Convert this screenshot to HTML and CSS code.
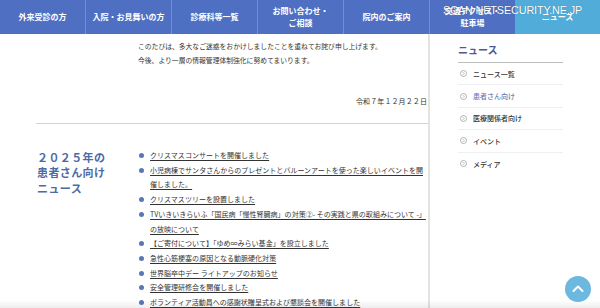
FILE: index.html
```html
<!DOCTYPE html>
<html lang="ja">
<head>
<meta charset="utf-8">
<title>患者さん向けニュース</title>
<link rel="stylesheet" href="styles.css">
</head>
<body>
<nav class="gnav">
  <a class="gnav-item">外来受診の方</a>
  <a class="gnav-item">入院・お見舞いの方</a>
  <a class="gnav-item">診療科等一覧</a>
  <a class="gnav-item">お問い合わせ・<br>ご相談</a>
  <a class="gnav-item">院内のご案内</a>
  <a class="gnav-item">交通アクセス・<br>駐車場</a>
  <a class="gnav-item current">ニュース</a>
</nav>
<div class="watermark">SCAN NETSECURITY.NE.JP</div>

<div class="page">
  <main class="main">
    <div class="notice">
      <p>このたびは、多大なご迷惑をおかけしましたことを重ねてお詫び申し上げます。</p>
      <p>今後、より一層の情報管理体制強化に努めてまいります。</p>
    </div>
    <p class="date">令和７年１２月２２日</p>
    <hr class="rule">
    <section class="news">
      <h2 class="news-title">２０２５年の<br>患者さん向け<br>ニュース</h2>
      <ul class="news-list">
        <li><a>クリスマスコンサートを開催しました</a></li>
        <li><a>小児病棟でサンタさんからのプレゼントとバルーンアートを使った楽しいイベントを開催しました。</a></li>
        <li><a>クリスマスツリーを設置しました</a></li>
        <li><a>TVいきいきらいふ「国民病「慢性腎臓病」の対策②- その実践と県の取組みについて -」の放映について</a></li>
        <li><a>【ご寄付について】「ゆめ∞みらい基金」を設立しました</a></li>
        <li><a>急性心筋梗塞の原因となる動脈硬化対策</a></li>
        <li><a>世界脳卒中デー ライトアップのお知らせ</a></li>
        <li><a>安全管理研修会を開催しました</a></li>
        <li><a>ボランティア活動員への感謝状贈呈式および懇談会を開催しました</a></li>
      </ul>
    </section>
  </main>
  <aside class="side">
    <h3 class="side-title">ニュース</h3>
    <ul class="side-list">
      <li><svg class="ico" viewBox="0 0 10 10"><circle cx="5" cy="5" r="4.3" fill="none" stroke="#8a8a8a" stroke-width="0.9"/><path d="M4.2 3.2 L6 5 L4.2 6.8" fill="none" stroke="#8a8a8a" stroke-width="0.9"/></svg>ニュース一覧</li>
      <li class="active"><svg class="ico" viewBox="0 0 10 10"><circle cx="5" cy="5" r="4.3" fill="none" stroke="#8a8a8a" stroke-width="0.9"/><path d="M4.2 3.2 L6 5 L4.2 6.8" fill="none" stroke="#8a8a8a" stroke-width="0.9"/></svg>患者さん向け</li>
      <li><svg class="ico" viewBox="0 0 10 10"><circle cx="5" cy="5" r="4.3" fill="none" stroke="#8a8a8a" stroke-width="0.9"/><path d="M4.2 3.2 L6 5 L4.2 6.8" fill="none" stroke="#8a8a8a" stroke-width="0.9"/></svg>医療関係者向け</li>
      <li><svg class="ico" viewBox="0 0 10 10"><circle cx="5" cy="5" r="4.3" fill="none" stroke="#8a8a8a" stroke-width="0.9"/><path d="M4.2 3.2 L6 5 L4.2 6.8" fill="none" stroke="#8a8a8a" stroke-width="0.9"/></svg>イベント</li>
      <li><svg class="ico" viewBox="0 0 10 10"><circle cx="5" cy="5" r="4.3" fill="none" stroke="#8a8a8a" stroke-width="0.9"/><path d="M4.2 3.2 L6 5 L4.2 6.8" fill="none" stroke="#8a8a8a" stroke-width="0.9"/></svg>メディア</li>
    </ul>
  </aside>
</div>

<a class="totop"><svg viewBox="0 0 26 26"><path d="M8.5 15 L13 10.5 L17.5 15" fill="none" stroke="#fff" stroke-width="2" stroke-linecap="round" stroke-linejoin="round"/></svg></a>
<div class="shade"></div>
</body>
</html>
```

FILE: styles.css
```css
* { box-sizing: border-box; }
html, body { margin: 0; padding: 0; }
body {
  width: 600px;
  height: 308px;
  overflow: hidden;
  background: #fff;
  color: #333;
  font-family: "Noto Sans CJK JP", "Noto Sans", sans-serif;
  position: relative;
}
p, h2, h3, ul { margin: 0; padding: 0; }
ul { list-style: none; }

.gnav {
  display: flex;
  height: 34px;
  background: #4e6fc2;
}
.gnav-item {
  flex: 1;
  display: flex;
  align-items: center;
  justify-content: center;
  text-align: center;
  color: #fff;
  font-size: 8px;
  font-weight: 700;
  line-height: 12px;
  border-left: 1px solid rgba(255,255,255,0.22);
}
.gnav-item:first-child { border-left: none; }
.gnav-item.current { background: #52acd9; border-left: none; }

.watermark {
  position: absolute;
  left: 443px;
  top: 4px;
  font-family: "Liberation Sans", Arial, sans-serif;
  font-size: 10.8px;
  color: #fff;
  letter-spacing: -0.1px;
  text-shadow: 0 0 1px rgba(0,0,0,0.35);
}

.page {
  display: grid;
  grid-template-columns: 428px 1fr;
  height: 274px;
}

.main { padding-top: 5px; }
.notice {
  padding-left: 138px;
  font-size: 6.8px;
  line-height: 14px;
  color: #333;
}
.date {
  margin-top: 27px;
  text-align: right;
  padding-right: 1px;
  font-size: 7px;
  line-height: 14px;
  letter-spacing: 0.1px;
}
.rule {
  margin: 15px 0 0 36px;
  border: none;
  border-top: 1px solid #d2d2d6;
  height: 0;
}

.news {
  display: flex;
  margin-top: 24px;
}
.news-title {
  flex: none;
  width: 101px;
  margin-left: 37px;
  padding-top: 1.5px;
  font-size: 11px;
  line-height: 15.5px;
  letter-spacing: 0.4px;
  font-weight: 700;
  color: #4d6aa6;
}
.news-list {
  flex: none;
  width: 290px;
  font-size: 7px;
  line-height: 14.7px;
  letter-spacing: 0.02px;
}
.news-list li {
  position: relative;
  padding-left: 12px;
}
.news-list li::before {
  content: "";
  position: absolute;
  left: 0.5px;
  top: 5px;
  width: 5px;
  height: 5px;
  border-radius: 50%;
  background: #5b76b8;
}
.news-list a {
  color: #333;
  text-decoration: underline;
  text-underline-offset: 1.5px;
}

.side {
  border-left: 2px solid #e4e3e0;
  padding: 9px 37px 0 28px;
}
.side-title {
  font-size: 10px;
  line-height: 14px;
  font-weight: 700;
  color: #50598e;
  padding-bottom: 5px;
  border-bottom: 1.5px solid #bdbdbd;
}
.side-list li {
  display: flex;
  align-items: center;
  height: 22.4px;
  font-size: 7px;
  font-weight: 500;
  color: #333;
  border-bottom: 1px solid #efefef;
  padding-left: 2px;
}
.side-list li:last-child { border-bottom: none; }
.side-list li.active { color: #6a7cb8; }
.ico {
  width: 7px;
  height: 7px;
  margin-right: 6px;
  flex: none;
}

.totop {
  position: absolute;
  left: 565px;
  top: 276px;
  width: 26px;
  height: 26px;
  border-radius: 50%;
  background: #6cb8de;
  display: block;
}
.totop svg { width: 26px; height: 26px; display: block; }

.shade {
  position: absolute;
  left: 0;
  right: 0;
  bottom: 0;
  height: 8px;
  background: linear-gradient(to bottom, rgba(0,0,0,0), rgba(0,0,0,0.07));
  pointer-events: none;
}
```
